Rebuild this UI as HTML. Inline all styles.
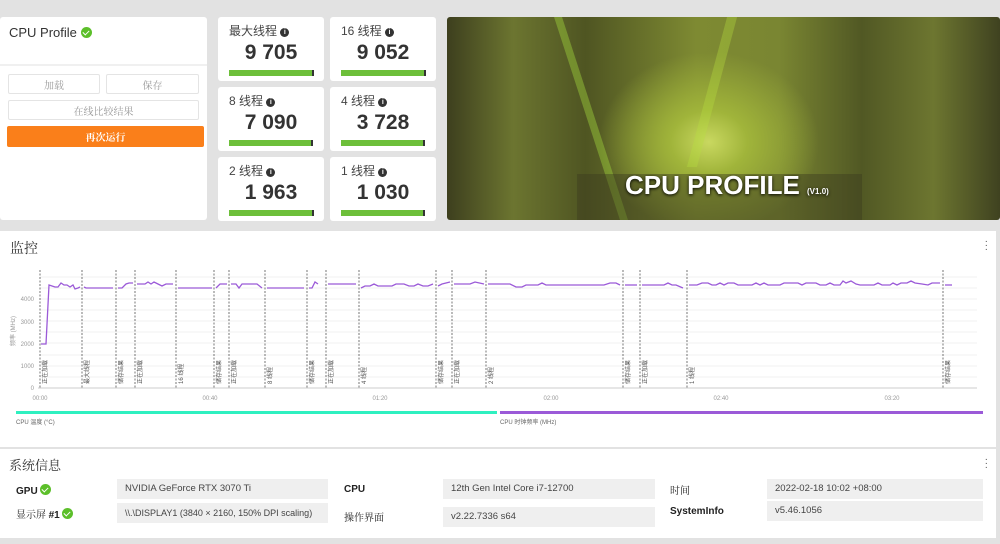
<!DOCTYPE html>
<html><head><meta charset="utf-8">
<style>
*{margin:0;padding:0;box-sizing:border-box}
body{width:1000px;height:544px;overflow:hidden;background:#e2e2e2;font-family:"Liberation Sans","Noto Sans CJK SC",sans-serif;position:relative;color:#333}
.card{position:absolute;background:#fff;border-radius:3px}
.sc{width:106px;height:64px}
.sc .t{position:absolute;left:11px;top:5px;font-size:12px;color:#444}
.i{display:inline-block;width:9px;height:9px;border-radius:50%;background:#333;color:#fff;font-size:7px;line-height:9px;text-align:center;font-weight:bold;vertical-align:1px}
.sc .v{position:absolute;left:0;right:0;top:24px;text-align:center;font-size:21px;font-weight:bold;color:#333}
.sc .b{position:absolute;left:11px;top:53px;width:85px;height:6px;background:#6dbf3a;border-right:2px solid #333}
.btn{position:absolute;height:20px;border:1px solid #e4e4e4;border-radius:2px;font-size:10px;color:#999;text-align:center;line-height:19px;font-family:"Noto Serif CJK SC",serif}
.chk{display:inline-block;width:11px;height:11px;border-radius:50%;background:#5cbf2a;position:relative;vertical-align:-1px}
.chk:after{content:"";position:absolute;left:3px;top:2px;width:3px;height:5px;border:solid #fff;border-width:0 1.5px 1.5px 0;transform:rotate(45deg)}
.f{position:absolute;background:#efefef;font-size:9.5px;color:#444;padding-left:8px;line-height:20px;height:20px;white-space:nowrap;overflow:hidden}
.l{position:absolute;font-size:10px;font-weight:bold;color:#222;line-height:12px;white-space:nowrap}
</style></head><body>
<div class="card" style="left:0;top:17px;width:207px;height:203px">
 <div style="position:absolute;left:9px;top:8px;font-size:13px;color:#333">CPU Profile <span class="chk"></span></div>
 <div style="position:absolute;left:0;right:0;top:47px;height:2px;background:#f0f0f0"></div>
 <div class="btn" style="left:8px;top:57px;width:92px">加载</div>
 <div class="btn" style="left:106px;top:57px;width:93px">保存</div>
 <div class="btn" style="left:8px;top:83px;width:191px">在线比较结果</div>
 <div class="btn" style="left:7px;top:109px;width:197px;height:21px;background:#fa7f1a;border-color:#fa7f1a;color:#fff;font-weight:bold">再次运行</div>
</div>
<div class="card sc" style="left:218px;top:17px"><div class="t">最大线程 <span class="i">i</span></div><div class="v">9 705</div><div class="b"></div></div>
<div class="card sc" style="left:330px;top:17px"><div class="t">16 线程 <span class="i">i</span></div><div class="v">9 052</div><div class="b"></div></div>
<div class="card sc" style="left:218px;top:87px"><div class="t">8 线程 <span class="i">i</span></div><div class="v">7 090</div><div class="b" style="width:84px"></div></div>
<div class="card sc" style="left:330px;top:87px"><div class="t">4 线程 <span class="i">i</span></div><div class="v">3 728</div><div class="b" style="width:84px;left:11px"></div></div>
<div class="card sc" style="left:218px;top:157px"><div class="t">2 线程 <span class="i">i</span></div><div class="v">1 963</div><div class="b"></div></div>
<div class="card sc" style="left:330px;top:157px"><div class="t">1 线程 <span class="i">i</span></div><div class="v">1 030</div><div class="b" style="width:84px"></div></div>
<div style="position:absolute;left:447px;top:17px;width:553px;height:203px;border-radius:3px;overflow:hidden;background:radial-gradient(ellipse 110px 90px at 262px 125px,#c9d860 0%,#a0b43a 35%,rgba(100,110,30,0) 100%),linear-gradient(90deg,#3d3f1e 0%,#6c7530 12%,#4f5522 25%,#7e8a32 45%,#7a8632 60%,#515824 75%,#6d7630 88%,#3f4220 100%)">
 <div style="position:absolute;left:140px;top:0;width:8px;height:203px;background:#9ed03c;opacity:.45;transform:skewX(18deg)"></div>
 <div style="position:absolute;left:260px;top:0;width:10px;height:150px;background:#b8e040;opacity:.35;transform:skewX(-15deg)"></div>
 <div style="position:absolute;left:130px;top:157px;width:285px;height:46px;background:rgba(60,60,30,.45)"></div>
 <div style="position:absolute;left:178px;top:153px;font-size:26px;font-weight:bold;color:#fff;text-shadow:0 1px 3px #000">CPU PROFILE <span style="font-size:8px">(V1.0)</span></div>
</div>
<div class="card" style="left:0;top:231px;width:996px;height:216px;border-radius:0">
 <div style="position:absolute;left:10px;top:7px;font-size:14px;font-family:'Noto Serif CJK SC',serif;color:#333">监控</div>
 <div style="position:absolute;right:8px;top:9px;font-size:10px;line-height:4px;color:#555">·<br>·<br>·</div>
 <svg width="996" height="216" style="position:absolute;left:0;top:0" font-family="Liberation Sans,Noto Sans CJK SC,sans-serif">
  <g stroke="#f0f0f0" stroke-width="1">
   <line x1="40" y1="46" x2="977" y2="46"/><line x1="40" y1="57" x2="977" y2="57"/><line x1="40" y1="68" x2="977" y2="68"/><line x1="40" y1="79" x2="977" y2="79"/><line x1="40" y1="90" x2="977" y2="90"/><line x1="40" y1="101" x2="977" y2="101"/><line x1="40" y1="112" x2="977" y2="112"/><line x1="40" y1="124" x2="977" y2="124"/><line x1="40" y1="135" x2="977" y2="135"/><line x1="40" y1="146" x2="977" y2="146"/>
  </g>
  <line x1="38" y1="157" x2="977" y2="157" stroke="#ccc"/>
  <g font-size="6" fill="#999" text-anchor="end">
   <text x="34" y="159">0</text><text x="34" y="137">1000</text><text x="34" y="115">2000</text><text x="34" y="93">3000</text><text x="34" y="70">4000</text>
  </g>
  <text x="15" y="100" font-size="6" fill="#999" transform="rotate(-90 15 100)" text-anchor="middle">频率 (MHz)</text>
  <g font-size="6" fill="#999" text-anchor="middle">
   <text x="40" y="169">00:00</text><text x="210" y="169">00:40</text><text x="380" y="169">01:20</text><text x="551" y="169">02:00</text><text x="721" y="169">02:40</text><text x="892" y="169">03:20</text>
  </g>
  <g stroke="#555" stroke-width="0.8" stroke-dasharray="2,1.5">
   <line x1="40" y1="39" x2="40" y2="157"/><line x1="82" y1="39" x2="82" y2="157"/><line x1="116" y1="39" x2="116" y2="157"/><line x1="135" y1="39" x2="135" y2="157"/><line x1="176" y1="39" x2="176" y2="157"/><line x1="214" y1="39" x2="214" y2="157"/><line x1="229" y1="39" x2="229" y2="157"/><line x1="265" y1="39" x2="265" y2="157"/><line x1="307" y1="39" x2="307" y2="157"/><line x1="326" y1="39" x2="326" y2="157"/><line x1="359" y1="39" x2="359" y2="157"/><line x1="436" y1="39" x2="436" y2="157"/><line x1="452" y1="39" x2="452" y2="157"/><line x1="486" y1="39" x2="486" y2="157"/><line x1="623" y1="39" x2="623" y2="157"/><line x1="640" y1="39" x2="640" y2="157"/><line x1="687" y1="39" x2="687" y2="157"/><line x1="943" y1="39" x2="943" y2="157"/>
  </g>
  <g font-size="6" fill="#555">
   <text transform="translate(47,153) rotate(-90)">正在加载</text><text transform="translate(89,153) rotate(-90)">最大线程</text><text transform="translate(123,153) rotate(-90)">储存结果</text><text transform="translate(142,153) rotate(-90)">正在加载</text><text transform="translate(183,153) rotate(-90)">16 线程</text><text transform="translate(221,153) rotate(-90)">储存结果</text><text transform="translate(236,153) rotate(-90)">正在加载</text><text transform="translate(272,153) rotate(-90)">8 线程</text><text transform="translate(314,153) rotate(-90)">储存结果</text><text transform="translate(333,153) rotate(-90)">正在加载</text><text transform="translate(366,153) rotate(-90)">4 线程</text><text transform="translate(443,153) rotate(-90)">储存结果</text><text transform="translate(459,153) rotate(-90)">正在加载</text><text transform="translate(493,153) rotate(-90)">2 线程</text><text transform="translate(630,153) rotate(-90)">储存结果</text><text transform="translate(647,153) rotate(-90)">正在加载</text><text transform="translate(694,153) rotate(-90)">1 线程</text><text transform="translate(950,153) rotate(-90)">储存结果</text>
  </g>
  <g fill="none" stroke="#9b5ad8" stroke-width="1.3">
   <polyline points="41,113 46,113 49,54 52,55 55,56 58,56 61,52 64,54 67,54 70,56 73,54 75,58 78,57 80,56"/>
   <polyline points="84,56 86,57 113,57"/>
   <polyline points="118,57 122,57 126,53 129,52 133,52"/>
   <polyline points="137,53 145,53 148,51 151,53 154,51 158,53 162,55 166,53 173,53"/>
   <polyline points="178,57 212,57"/>
   <polyline points="216,57 220,53 227,53"/>
   <polyline points="231,53 236,53 239,57 242,53 252,53 257,53 262,57"/>
   <polyline points="267,57 304,57"/>
   <polyline points="309,57 312,57 315,51 318,53"/>
   <polyline points="328,53 356,53"/>
   <polyline points="361,57 365,55 370,55 374,53 378,55 392,55 396,53 404,53 409,55 414,55 418,53 423,55 428,55 433,53"/>
   <polyline points="438,55 442,53 450,51"/>
   <polyline points="454,53 470,53 475,51 484,53"/>
   <polyline points="488,53 510,53 516,56 522,56 526,54 538,54 542,52 546,54 604,54 610,52 616,52 620,54"/>
   <polyline points="625,54 637,54"/>
   <polyline points="642,54 664,54 668,52 672,54 676,54 683,57"/>
   <polyline points="689,54 697,54 702,52 708,52 712,54 716,54 720,52 724,54 728,52 734,52 738,54 752,54 756,52 760,54 764,52 768,54 780,54 784,52 798,52 802,54 806,52 816,52 820,54 826,54 830,52 834,54 840,54 843,50 846,52 851,50 856,53 860,54 874,54 878,52 882,54 890,54 893,52 897,54 901,52 907,52 911,50 915,52 922,53 928,54 932,52 940,52"/>
   <polyline points="945,54 952,54"/>
  </g>
  <rect x="16" y="180" width="481" height="3" fill="#2ff0c0"/>
  <rect x="500" y="180" width="483" height="3" fill="#9b5ad8"/>
  <text x="16" y="193" font-size="6" fill="#666">CPU 温度 (°C)</text>
  <text x="500" y="193" font-size="6" fill="#666">CPU 时钟频率 (MHz)</text>
 </svg>
</div>
<div class="card" style="left:0;top:449px;width:996px;height:89px;border-radius:0">
 <div style="position:absolute;left:9px;top:6px;font-size:13px;font-family:'Noto Serif CJK SC',serif;color:#333">系统信息</div>
 <div style="position:absolute;right:8px;top:9px;font-size:10px;line-height:4px;color:#555">·<br>·<br>·</div>
 <div class="l" style="left:16px;top:35px">GPU <span class="chk"></span></div>
 <div class="l" style="left:16px;top:59px;font-weight:normal;font-family:'Noto Serif CJK SC',serif">显示屏 <b style="font-family:'Liberation Sans'">#1</b> <span class="chk"></span></div>
 <div class="f" style="left:117px;top:30px;width:211px">NVIDIA GeForce RTX 3070 Ti</div>
 <div class="f" style="left:117px;top:54px;width:211px;font-size:9px">\\.\DISPLAY1 (3840 × 2160, 150% DPI scaling)</div>
 <div class="l" style="left:344px;top:35px">CPU</div>
 <div class="l" style="left:344px;top:62px;font-weight:normal;font-family:'Noto Serif CJK SC',serif">操作界面</div>
 <div class="f" style="left:443px;top:30px;width:212px">12th Gen Intel Core i7-12700</div>
 <div class="f" style="left:443px;top:58px;width:212px">v2.22.7336 s64</div>
 <div class="l" style="left:670px;top:35px;font-weight:normal;font-family:'Noto Serif CJK SC',serif">时间</div>
 <div class="l" style="left:670px;top:57px">SystemInfo</div>
 <div class="f" style="left:767px;top:30px;width:216px">2022-02-18 10:02 +08:00</div>
 <div class="f" style="left:767px;top:52px;width:216px">v5.46.1056</div>
</div>
</body></html>
